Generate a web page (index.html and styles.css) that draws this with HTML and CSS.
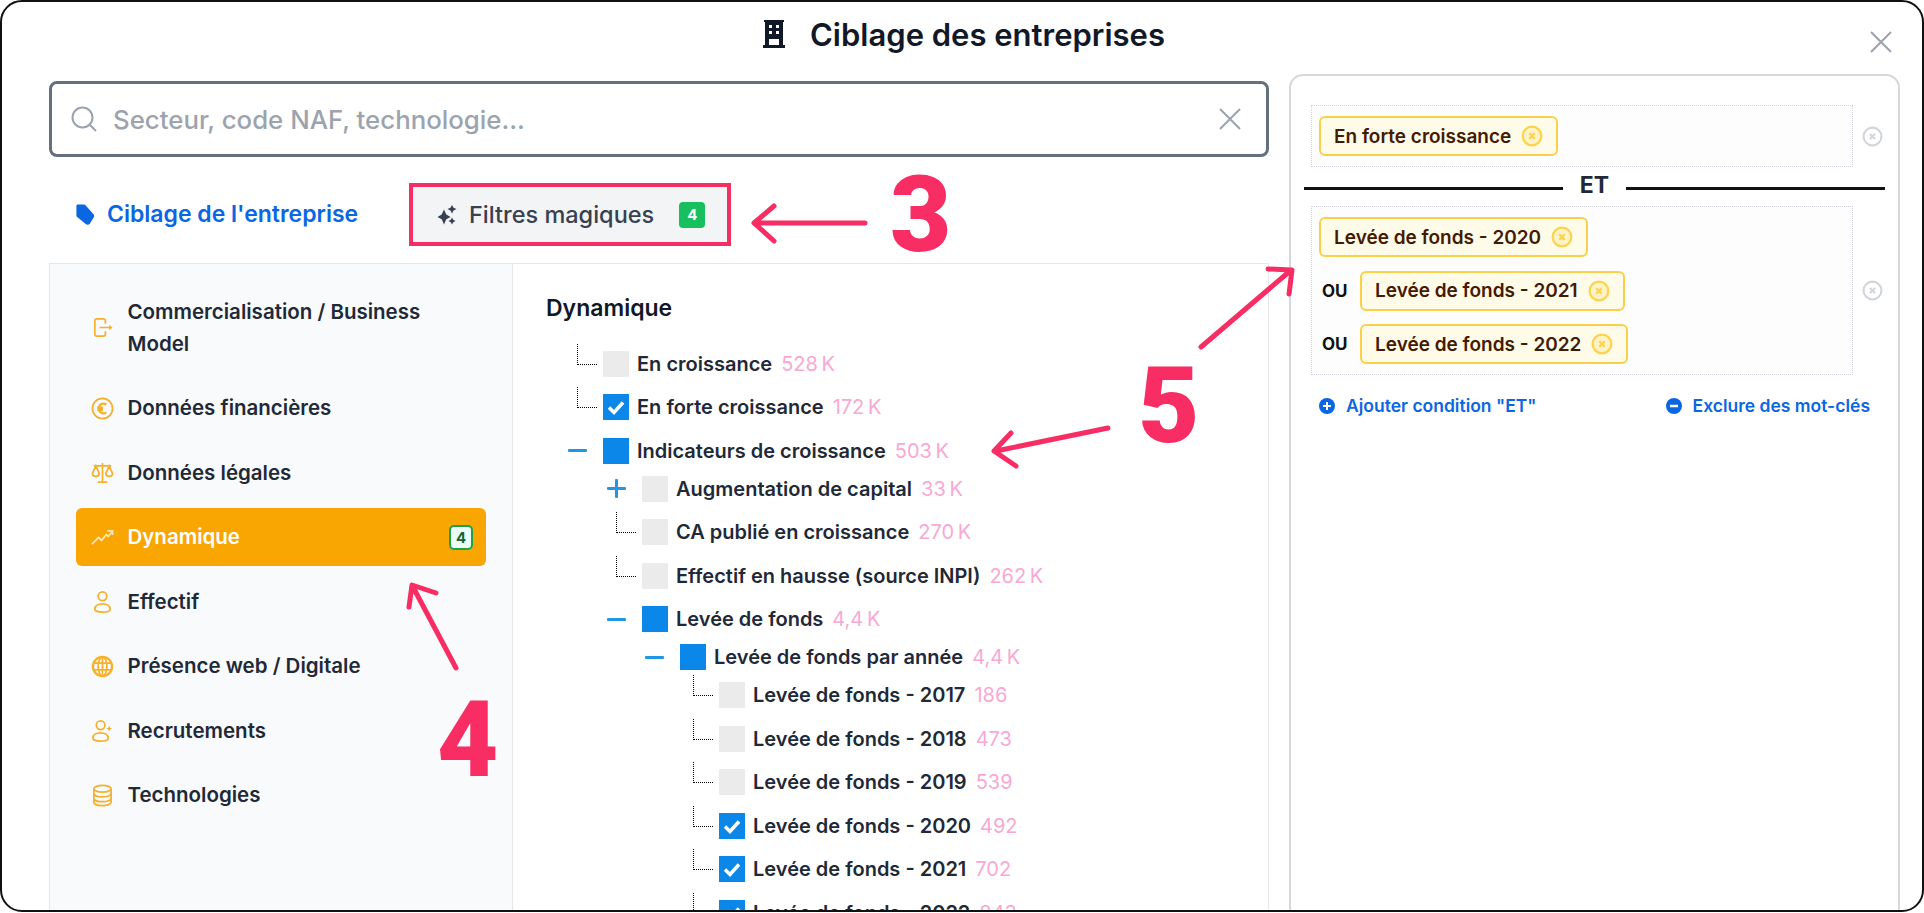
FILE: index.html
```html
<!DOCTYPE html>
<html lang="fr">
<head>
    <meta charset="UTF-8">
    <title>Ciblage des entreprises</title>
    <link rel="stylesheet" href="styles.css">
</head>
<body>
    <div class="window">
        <header class="modal-header">
            <svg class="building-icon" viewBox="0 0 24 28"><path fill="#111827" fill-rule="evenodd" d="M2 0h20v2h-1v23h2v3H1v-3h2V2H2zM7 5v3h3V5zm7 0v3h3V5zM7 11v3h3v-3zm7 0v3h3v-3zM7 19v6h10v-6z"/></svg>
            <h1>Ciblage des entreprises</h1>
        </header>
        <svg class="close-icon" viewBox="0 0 22 22"><path d="M1 1l20 20M21 1L1 21" stroke="#9ca3af" stroke-width="2" fill="none"/></svg>

        <div class="modal-body">
            <div class="left-col">
                <div class="search-box">
                    <svg class="search-icon" viewBox="0 0 26 26"><circle cx="11.5" cy="11.5" r="10" fill="none" stroke="#9ca3af" stroke-width="2"/><path d="M19 19l6 6" stroke="#9ca3af" stroke-width="2"/></svg>
                    <span class="placeholder">Secteur, code NAF, technologie...</span>
                    <svg class="search-clear" viewBox="0 0 22 22"><path d="M1 1l20 20M21 1L1 21" stroke="#9ca3af" stroke-width="2" fill="none"/></svg>
                </div>

                <div class="tabs">
                    <div class="tab tab-active">
                        <svg class="tab-icon" viewBox="0 0 20 22"><path fill="#0b66e4" d="M2 1.5h6.500a2 2 0 0 1 1.500.7l7.500 8.300a3 3 0 0 1 .2 3.700l-3.600 5.600a2.500 2.500 0 0 1-3.800.400L2 13.500a2 2 0 0 1-.7-1.500V2.500z"/></svg>
                        <span class="tab-text">Ciblage de l'entreprise</span>
                    </div>
                    <div class="tab tab-magic">
                        <svg class="tab-icon" viewBox="0 0 20 20"><path fill="#374151" d="M7 4.500l2.300 5L13.500 12l-4.200 2.300L7 19.500l-2.300-5.200L.500 12l4.200-2.500zM15 0l1.500 2.800L19.500 4l-3 1.500L15 8.500l-1.500-3-3-1.500 3-1.200zM15 12.500l1.200 2.300 2.300 1.200-2.300 1.200-1.200 2.300-1.200-2.300-2.300-1.200 2.300-1.200z"/></svg>
                        <span class="tab-label">Filtres magiques</span>
                        <span class="badge-green">4</span>
                    </div>
                </div>

                <div class="panel">
                    <nav class="sidebar">
                        <div class="side-item">
                            <svg class="side-icon" viewBox="0 0 24 24"><path d="M15 8V5a2 2 0 0 0-2-2H6a2 2 0 0 0-2 2v14a2 2 0 0 0 2 2h7a2 2 0 0 0 2-2v-3M9 12h12"/><path class="solid" d="M19 9.500l3.500 2.500-3.500 2.500z"/></svg>
                            <span>Commercialisation / Business Model</span>
                        </div>
                        <div class="side-item">
                            <svg class="side-icon" viewBox="0 0 24 24"><circle cx="12" cy="12" r="10.500"/><path class="thick" d="M16 8a5 5 0 1 0 0 8M6.500 11h6M6.500 13.500h6"/></svg>
                            <span>Données financières</span>
                        </div>
                        <div class="side-item">
                            <svg class="side-icon" viewBox="0 0 24 24"><path d="M12 2v19M7 22h10M3 5h18M5 5l-3.500 8a3.500 3 0 0 0 7 0zM19 5l-3.500 8a3.500 3 0 0 0 7 0z"/></svg>
                            <span>Données légales</span>
                        </div>
                        <div class="side-item side-item-active">
                            <svg class="side-icon" viewBox="0 0 24 24"><path d="M1 19l7-7 3 3 5-6 2 2 4-5M17 5h5.500v4.500"/></svg>
                            <span>Dynamique</span>
                            <span class="badge-outline">4</span>
                        </div>
                        <div class="side-item">
                            <svg class="side-icon" viewBox="0 0 24 24"><circle cx="12" cy="6.500" r="4.500"/><path d="M4 20c0-3.500 3.500-5.500 8-5.500s8 2 8 5.500c0 2-4 3-8 3s-8-1-8-3z"/></svg>
                            <span>Effectif</span>
                        </div>
                        <div class="side-item">
                            <svg class="side-icon" viewBox="0 0 24 24"><circle class="thick" cx="12" cy="12" r="10"/><ellipse cx="12" cy="12" rx="4.500" ry="10"/><path d="M2.500 8.500h19M2.500 15.500h19M12 2v20"/></svg>
                            <span>Présence web / Digitale</span>
                        </div>
                        <div class="side-item">
                            <svg class="side-icon" viewBox="0 0 24 24"><circle cx="10" cy="6.500" r="4.500"/><path d="M2 20c0-3.500 3.500-5.500 8-5.500s8 2 8 5.500c0 2-4 3-8 3s-8-1-8-3z"/><path class="solid" d="M19 7l1 2 2 1-2 1-1 2-1-2-2-1 2-1z"/></svg>
                            <span>Recrutements</span>
                        </div>
                        <div class="side-item">
                            <svg class="side-icon" viewBox="0 0 24 24"><ellipse cx="12" cy="5" rx="9" ry="3.500"/><path d="M3 5v14c0 2 4 3.500 9 3.500s9-1.500 9-3.500V5M3 10c0 2 4 3.500 9 3.500s9-1.500 9-3.500M3 15c0 2 4 3.500 9 3.500s9-1.500 9-3.500"/></svg>
                            <span>Technologies</span>
                        </div>
                    </nav>

                    <section class="tree">
                        <h2>Dynamique</h2>
                        <div class="row leaf lvl-1"><span class="toggle"><i class="dots"></i></span><span class="box"></span><b>En croissance</b><em>528 K</em></div>
                        <div class="row leaf lvl-1"><span class="toggle"><i class="dots"></i></span><span class="box checked"><svg viewBox="0 0 26 26"><path d="M6 13.500l5 5 9-10"/></svg></span><b>En forte croissance</b><em>172 K</em></div>
                        <div class="row lvl-1"><span class="toggle"><i class="minus"></i></span><span class="box partial"></span><b>Indicateurs de croissance</b><em>503 K</em></div>
                        <div class="row leaf lvl-2"><span class="toggle"><i class="minus"></i><i class="plus"></i></span><span class="box"></span><b>Augmentation de capital</b><em>33 K</em></div>
                        <div class="row leaf lvl-2"><span class="toggle"><i class="dots"></i></span><span class="box"></span><b>CA publié en croissance</b><em>270 K</em></div>
                        <div class="row leaf lvl-2"><span class="toggle"><i class="dots"></i></span><span class="box"></span><b>Effectif en hausse (source INPI)</b><em>262 K</em></div>
                        <div class="row lvl-2"><span class="toggle"><i class="minus"></i></span><span class="box partial"></span><b>Levée de fonds</b><em>4,4 K</em></div>
                        <div class="row lvl-3"><span class="toggle"><i class="minus"></i></span><span class="box partial"></span><b>Levée de fonds par année</b><em>4,4 K</em></div>
                        <div class="row leaf lvl-4"><span class="toggle"><i class="dots"></i></span><span class="box"></span><b>Levée de fonds - 2017</b><em>186</em></div>
                        <div class="row leaf lvl-4"><span class="toggle"><i class="dots"></i></span><span class="box"></span><b>Levée de fonds - 2018</b><em>473</em></div>
                        <div class="row leaf lvl-4"><span class="toggle"><i class="dots"></i></span><span class="box"></span><b>Levée de fonds - 2019</b><em>539</em></div>
                        <div class="row leaf lvl-4"><span class="toggle"><i class="dots"></i></span><span class="box checked"><svg viewBox="0 0 26 26"><path d="M6 13.500l5 5 9-10"/></svg></span><b>Levée de fonds - 2020</b><em>492</em></div>
                        <div class="row leaf lvl-4"><span class="toggle"><i class="dots"></i></span><span class="box checked"><svg viewBox="0 0 26 26"><path d="M6 13.500l5 5 9-10"/></svg></span><b>Levée de fonds - 2021</b><em>702</em></div>
                        <div class="row leaf lvl-4"><span class="toggle"><i class="dots"></i></span><span class="box checked"><svg viewBox="0 0 26 26"><path d="M6 13.500l5 5 9-10"/></svg></span><b>Levée de fonds - 2022</b><em>843</em></div>
                    </section>
                </div>
            </div>

            <aside class="right-col">
                <div class="cond-row">
                    <div class="cond-group">
                        <div class="chip-line">
                            <span class="chip">En forte croissance <svg class="chip-x" viewBox="0 0 20 20"><circle cx="10" cy="10" r="8.500"/><path d="M7.500 7.500l5 5M12.500 7.500l-5 5"/></svg></span>
                        </div>
                    </div>
                    <svg class="cond-x" viewBox="0 0 20 20"><circle cx="10" cy="10" r="8.500"/><path d="M7.500 7.500l5 5M12.500 7.500l-5 5"/></svg>
                </div>

                <div class="divider"><span>ET</span></div>

                <div class="cond-row">
                    <div class="cond-group">
                        <div class="chip-line">
                            <span class="chip">Levée de fonds - 2020 <svg class="chip-x" viewBox="0 0 20 20"><circle cx="10" cy="10" r="8.500"/><path d="M7.500 7.500l5 5M12.500 7.500l-5 5"/></svg></span>
                        </div>
                        <div class="chip-line">
                            <span class="ou">OU</span>
                            <span class="chip">Levée de fonds - 2021 <svg class="chip-x" viewBox="0 0 20 20"><circle cx="10" cy="10" r="8.500"/><path d="M7.500 7.500l5 5M12.500 7.500l-5 5"/></svg></span>
                        </div>
                        <div class="chip-line">
                            <span class="ou">OU</span>
                            <span class="chip">Levée de fonds - 2022 <svg class="chip-x" viewBox="0 0 20 20"><circle cx="10" cy="10" r="8.500"/><path d="M7.500 7.500l5 5M12.500 7.500l-5 5"/></svg></span>
                        </div>
                    </div>
                    <svg class="cond-x" viewBox="0 0 20 20"><circle cx="10" cy="10" r="8.500"/><path d="M7.500 7.500l5 5M12.500 7.500l-5 5"/></svg>
                </div>

                <div class="cond-actions">
                    <span class="action"><svg viewBox="0 0 16 16"><circle cx="8" cy="8" r="8" fill="#0b66e4"/><path d="M8 4v8M4 8h8" stroke="#fff" stroke-width="2"/></svg>Ajouter condition "ET"</span>
                    <span class="action"><svg viewBox="0 0 16 16"><circle cx="8" cy="8" r="8" fill="#0b66e4"/><path d="M4 8h8" stroke="#fff" stroke-width="2.500"/></svg>Exclure des mot-clés</span>
                </div>
            </aside>
        </div>

        <!-- annotations posées sur la capture -->
        <div class="annotations">
            <svg class="arrows" viewBox="0 0 1924 913">
                <path d="M865 223H755M774 206l-20 17 20 18"/>
                <path d="M456 668L413 587M409 607l3-22 24 8"/>
                <path d="M1108 428L996 451M1011 433l-17 18 22 15"/>
                <path d="M1201 347L1290 271M1268 269l24 1-3 24"/>
            </svg>
            <span class="num num-3">3</span>
            <span class="num num-4">4</span>
            <span class="num num-5">5</span>
        </div>
    </div>
</body>
</html>
```

FILE: styles.css
```css
* {
    box-sizing: border-box;
}

body {
    margin: 0;
    background: #fff;
    font-family: 'Inter', 'Liberation Sans', sans-serif;
    color: #111827;
}

.window {
    position: relative;
    width: 1924px;
    height: 912px;
    border: 2px solid #111;
    border-radius: 22px;
    overflow: hidden;
    background: #fff;
}

.modal-header {
    height: 64px;
    margin-bottom: 8px;
    padding-left: 3px;
    display: flex;
    align-items: center;
    justify-content: center;
    gap: 24px;
}

.modal-header h1 {
    margin: 0;
    font-size: 31px;
    font-weight: 600;
}

.building-icon {
    width: 24px;
    height: 28px;
}

.close-icon {
    position: absolute;
    top: 29px;
    right: 30px;
    width: 22px;
    height: 22px;
}

.modal-body {
    height: 838px;
    padding-left: 47px;
    display: flex;
    gap: 20px;
}

.left-col {
    width: 1220px;
    padding-top: 7px;
    display: flex;
    flex-direction: column;
}

/* recherche */
.search-box {
    height: 76px;
    padding: 0 25px 0 19px;
    display: flex;
    align-items: center;
    border: 3px solid #64707d;
    border-radius: 8px;
}

.search-icon {
    width: 26px;
    height: 26px;
    margin-right: 16px;
}

.placeholder {
    flex: 1;
    font-size: 25.800px;
    font-weight: 500;
    color: #9ca3af;
}

.search-clear {
    width: 22px;
    height: 22px;
}

/* onglets */
.tabs {
    height: 63px;
    margin-top: 26px;
    display: flex;
    align-items: center;
}

.tab {
    display: flex;
    align-items: center;
    font-size: 23px;
    font-weight: 600;
}

.tab-active {
    width: 360px;
    padding-left: 26px;
    gap: 11px;
    color: #0b66e4;
}

.tab-active .tab-icon {
    width: 21px;
    height: 23px;
}

.tab-text {
    margin-top: -2px;
}

.tab-icon {
    width: 20px;
    height: 20px;
}

.tab-magic {
    width: 322px;
    height: 63px;
    padding-left: 24px;
    gap: 12px;
    border: 4px solid #f42f63;
    background: #f3f4f6;
    color: #374151;
    font-size: 23.500px;
    font-weight: 500;
}

.tab-label {
    margin-right: 13px;
}

.badge-green {
    width: 26px;
    height: 26px;
    display: flex;
    align-items: center;
    justify-content: center;
    border-radius: 4px;
    background: #17bf5f;
    color: #fff;
    font-size: 15px;
    font-weight: 700;
}

/* panneau principal */
.panel {
    flex: 1;
    min-height: 0;
    margin-top: 17px;
    display: flex;
    border: 1px solid #e5e7eb;
    border-bottom: 0;
    overflow: hidden;
}

.sidebar {
    width: 463px;
    padding: 18.500px 26px 0;
    display: flex;
    flex-direction: column;
    gap: 6.500px;
    background: #f9fafb;
    border-right: 1px solid #e5e7eb;
}

.side-item {
    padding: 13px 16px 13px 15px;
    display: flex;
    align-items: center;
    gap: 13.500px;
    border-radius: 6px;
    font-size: 20.500px;
    font-weight: 600;
    line-height: 32px;
    color: #1f2937;
}

.side-item > span:first-of-type {
    flex: 1;
}

.side-item-active {
    padding-right: 13px;
    background: #f9a602;
    color: #fff;
}

.side-icon {
    width: 23px;
    height: 23px;
    flex: none;
    fill: none;
    stroke: #f5b02e;
    stroke-width: 1.800;
}

.side-icon .solid {
    fill: #f5b02e;
    stroke: none;
}

.side-icon .thick {
    stroke-width: 2.400;
}

.side-item-active .side-icon {
    stroke: #ffe7b3;
}

.badge-outline {
    width: 24px;
    height: 25px;
    display: flex;
    align-items: center;
    justify-content: center;
    border: 2px solid #16a34a;
    border-radius: 5px;
    background: #ecfdf5;
    color: #166534;
    font-size: 15px;
    font-weight: 700;
    line-height: 1;
}

/* arbre */
.tree {
    flex: 1;
    padding: 30px 0 0 33px;
}

.tree h2 {
    margin: 0 0 28.500px;
    height: 28px;
    font-size: 23px;
    font-weight: 600;
    line-height: 28px;
}

.row {
    height: 26px;
    margin-bottom: 12px;
    display: flex;
    align-items: center;
    font-size: 20px;
    white-space: nowrap;
}

.row.leaf {
    margin-bottom: 17.500px;
}

.lvl-1 { padding-left: 18px; }
.lvl-2 { padding-left: 57px; }
.lvl-3 { padding-left: 95px; }
.lvl-4 { padding-left: 134px; }

.row b {
    font-weight: 600;
    color: #1f2937;
}

.row em {
    margin-left: 9px;
    font-style: normal;
    font-weight: 400;
    word-spacing: -2px;
    color: #f9a8d4;
}

.toggle {
    position: relative;
    width: 39px;
    height: 26px;
    flex: none;
}

.dots {
    position: absolute;
    top: -7px;
    left: 13px;
    width: 20px;
    height: 21px;
    border-left: 1px dotted #000;
    border-bottom: 1px dotted #000;
}

.minus {
    position: absolute;
    top: 11.500px;
    left: 3.500px;
    width: 19px;
    height: 3px;
    border-radius: 1px;
    background: #2196e3;
}

.plus {
    position: absolute;
    top: 3.500px;
    left: 11.500px;
    width: 3px;
    height: 19px;
    border-radius: 1px;
    background: #2196e3;
}

.box {
    width: 26px;
    height: 26px;
    margin-right: 8px;
    flex: none;
    background: #ebebeb;
}

.box.checked,
.box.partial {
    background: #0a87e8;
}

.box svg {
    display: block;
    fill: none;
    stroke: #fff;
    stroke-width: 3.500;
}

/* conditions */
.right-col {
    width: 611px;
    height: 900px;
    padding: 29px 13px 0;
    border: 2px solid #d5d8dd;
    border-radius: 14px;
}

.cond-row {
    display: flex;
    align-items: center;
    gap: 9px;
    padding: 0 2px 0 7px;
}

.cond-group {
    flex: 1;
    padding: 10px 7px;
    display: flex;
    flex-direction: column;
    gap: 13.500px;
    border: 1px dotted #d1d5db;
    background: #fdfdfd;
}

.chip-line {
    display: flex;
    align-items: center;
}

.chip {
    height: 40px;
    padding: 0 13px;
    display: inline-flex;
    align-items: center;
    gap: 10px;
    border: 2px solid #fbcf4a;
    border-radius: 6px;
    background: #fefce8;
    color: #451a03;
    font-size: 19px;
    font-weight: 600;
}

.chip-x {
    width: 22px;
    height: 22px;
    fill: #fef3c7;
    stroke: #fcd34d;
    stroke-width: 2;
}

.cond-x {
    width: 21px;
    height: 21px;
    flex: none;
    fill: none;
    stroke: #d1d5db;
    stroke-width: 2;
}

.ou {
    width: 41px;
    padding-left: 3px;
    font-size: 17px;
    font-weight: 700;
    color: #111;
}

.divider {
    height: 39px;
    display: flex;
    align-items: center;
    gap: 17px;
    font-size: 23px;
    font-weight: 700;
    color: #1f2937;
}

.divider span {
    margin-top: -3px;
}

.divider::before,
.divider::after {
    content: "";
    flex: 1;
    height: 3px;
    background: #111;
    margin-top: 3px;
}

.cond-actions {
    margin-top: 20px;
    padding: 0 15px 0 15px;
    display: flex;
    justify-content: space-between;
}

.action {
    display: flex;
    align-items: center;
    gap: 11px;
    font-size: 17.500px;
    font-weight: 600;
    color: #0b66e4;
}

.action svg {
    width: 16px;
    height: 16px;
}

/* annotations */
.annotations {
    position: absolute;
    top: -2px;
    left: -2px;
    width: 1924px;
    height: 913px;
    pointer-events: none;
}

.arrows {
    position: absolute;
    top: 0;
    left: 0;
    width: 1924px;
    height: 913px;
    fill: none;
    stroke: #f72d63;
    stroke-width: 5;
    stroke-linecap: round;
    stroke-linejoin: round;
}

.num {
    position: absolute;
    font-family: 'Roboto', 'Inter', sans-serif;
    font-size: 106px;
    font-weight: 900;
    line-height: 106px;
    color: #f72d63;
}

.num-3 { top: 162px; left: 890px; }
.num-4 { top: 687px; left: 437px; }
.num-5 { top: 353px; left: 1138px; }
```
